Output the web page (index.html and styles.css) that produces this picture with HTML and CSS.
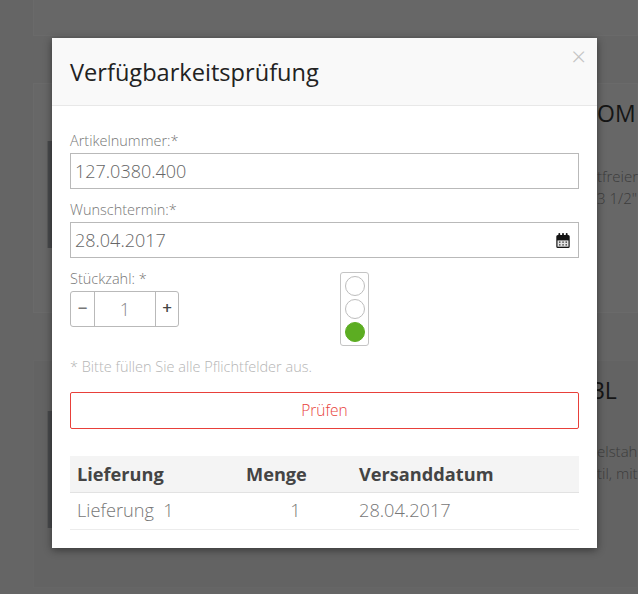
FILE: index.html
```html
<!DOCTYPE html>
<html lang="de">
<head>
<meta charset="utf-8">
<title>Verfügbarkeitsprüfung</title>
<link rel="stylesheet" href="styles.css">
</head>
<body>
<main class="page">
  <div class="card card-a"></div>
  <div class="card card-b">
    <div class="thumb thumb-b"></div>
    <div class="peek">
      <div class="peek-title">OM</div>
      <div class="peek-text">tfreier<br>3 1/2"</div>
    </div>
  </div>
  <div class="card card-c">
    <div class="thumb thumb-c"></div>
    <div class="peek peek-c">
      <div class="peek-title">BL</div>
      <div class="peek-text">elstah<br>til, mit</div>
    </div>
  </div>
</main>
<section class="modal">
  <header class="modal-head">
    <h1>Verfügbarkeitsprüfung</h1>
    <span class="close">×</span>
  </header>
  <div class="modal-body">
    <label class="lbl">Artikelnummer:*</label>
    <div class="field">127.0380.400</div>
    <label class="lbl lbl-next">Wunschtermin:*</label>
    <div class="field field-date">
      <span>28.04.2017</span>
      <svg class="cal" width="14" height="15" viewBox="0 0 14 15">
        <path d="M0.3 3.5a1.5 1.5 0 0 1 1.5-1.5h10.4a1.5 1.5 0 0 1 1.5 1.5v10a1.5 1.5 0 0 1-1.5 1.5h-10.4a1.5 1.5 0 0 1-1.5-1.5z" fill="#141414"/>
        <rect x="2.4" y="0" width="1.8" height="3.4" rx=".8" fill="#141414"/>
        <rect x="6.1" y="0" width="1.8" height="3.4" rx=".8" fill="#141414"/>
        <rect x="9.8" y="0" width="1.8" height="3.4" rx=".8" fill="#141414"/>
        <rect x="1.5" y="7.4" width="11" height="6.3" fill="#e4e4e4"/>
        <path d="M3 9.2h1.5M6.3 9.2h1.5M9.5 9.2h1.5M3 11.8h1.5M6.3 11.8h1.5M9.5 11.8h1.5" stroke="#333" stroke-width="1.3"/>
      </svg>
    </div>
    <div class="qty-row">
      <div class="qty-col">
        <label class="lbl lbl-next">Stückzahl: *</label>
        <div class="stepper">
          <span class="step step-minus">−</span>
          <span class="step-val">1</span>
          <span class="step step-plus">+</span>
        </div>
      </div>
      <div class="light">
        <span class="lamp"></span>
        <span class="lamp"></span>
        <span class="lamp lamp-on"></span>
      </div>
    </div>
    <p class="hint">* Bitte füllen Sie alle Pflichtfelder aus.</p>
    <button class="check" type="button">Prüfen</button>
    <table class="result">
      <thead>
        <tr><th class="c1">Lieferung</th><th class="c2">Menge</th><th>Versanddatum</th></tr>
      </thead>
      <tbody>
        <tr><td class="c1">Lieferung&nbsp; 1</td><td class="c2 num">1</td><td>28.04.2017</td></tr>
      </tbody>
    </table>
  </div>
</section>
</body>
</html>
```
FILE: styles.css
```css
* { box-sizing: border-box; }
html, body { margin: 0; height: 100%; }
body {
  position: relative;
  overflow: hidden;
  background: #656565;
  font-family: "Open Sans", sans-serif;
  font-weight: 300;
  color: #555;
}
.page {
  display: flex;
  flex-direction: column;
  gap: 47px;
  padding-left: 33px;
  height: 594px;
}
.card {
  background: #676767;
  border: 1px solid #6a6a6a;
  flex: none;
  display: flex;
  position: relative;
}
.card-a { height: 36px; border-top: 0; }
.card-b { height: 230px; padding: 57px 0 0 13px; }
.card-c { height: 228px; padding: 50px 0 0 13px; background: #636363; border-color: #666; }
.thumb { width: 12px; background: #484a4c; border-left: 1px solid #5a5a5a; flex: none; }
.thumb-b { height: 107px; }
.thumb-c { height: 117px; }
.peek {
  position: absolute;
  left: 563px;
  top: 14px;
  white-space: nowrap;
}
.peek-c { top: 14px; }
.peek-title { font-size: 23px; font-weight: 400; color: #151515; line-height: 30px; }
.peek-c .peek-title { margin-left: -7px; }
.peek-text { margin-top: 37px; font-size: 15px; line-height: 22px; color: #3c3c3c; }
.peek-c .peek-text { margin-top: 35px; }

.modal {
  position: absolute;
  left: 52px;
  top: 38px;
  width: 545px;
  height: 510px;
  background: #fff;
  box-shadow: 0 2px 8px rgba(0, 0, 0, .45);
}
.modal-head {
  position: relative;
  height: 68px;
  background: #f9f9f9;
  border-bottom: 1px solid #e8e8e8;
  padding: 17px 18px 0;
}
.modal-head h1 {
  margin: 0;
  font-size: 23.6px;
  font-weight: 400;
  line-height: 35px;
  color: #222;
}
.close {
  position: absolute;
  right: 11px;
  top: 4px;
  font-size: 26px;
  font-weight: 300;
  line-height: 28px;
  color: #c4c4c4;
}
.modal-body { padding: 25px 18px 0; }
.lbl {
  display: block;
  margin-bottom: 2px;
  font-size: 14.5px;
  line-height: 20px;
  color: #777;
}
.lbl-next { margin-top: 11px; }
.field {
  height: 36px;
  border: 1px solid #b9b9b9;
  padding: 0 4px;
  font-size: 18px;
  line-height: 34px;
  color: #666;
  display: flex;
  align-items: center;
  justify-content: space-between;
}
.cal { margin-right: 4px; }
.qty-row { display: flex; align-items: flex-start; }
.qty-col { width: 270px; flex: none; }
.stepper {
  width: 109px;
  height: 36px;
  border: 1px solid #b9b9b9;
  border-radius: 3px;
  display: flex;
  align-items: center;
  text-align: center;
}
.step {
  width: 24px;
  height: 100%;
  flex: none;
  line-height: 32px;
  font-size: 17px;
  font-weight: 600;
  color: #444;
}
.step-minus { color: #777; border-right: 1px solid #b9b9b9; }
.step-plus { width: 23px; border-left: 1px solid #b9b9b9; }
.step-val { flex: 1; font-size: 18px; color: #888; }
.light {
  margin-top: 14px;
  width: 29px;
  height: 74px;
  border: 1px solid #c4c4c4;
  border-radius: 3px;
  display: flex;
  flex-direction: column;
  align-items: center;
  gap: 3px;
  padding-top: 3px;
}
.lamp {
  width: 20px;
  height: 20px;
  border-radius: 50%;
  border: 1px solid #bdbdbd;
  flex: none;
}
.lamp-on { background: #5cad22; border-color: #5cad22; }
.hint {
  margin: 11px 0 0;
  font-size: 14.5px;
  line-height: 20px;
  color: #b5b5b5;
}
.check {
  display: block;
  width: 100%;
  height: 37px;
  margin-top: 15px;
  padding: 0 0 2px;
  background: #fff;
  border: 1px solid #e8403a;
  border-radius: 2px;
  font: 300 15.5px "Open Sans", sans-serif;
  color: #e8403a;
}
.result {
  width: 100%;
  margin-top: 27px;
  border-collapse: collapse;
  font-size: 18.2px;
}
.result th {
  height: 36px;
  padding: 0 0 0 7px;
  background: #f4f4f4;
  border-bottom: 1px solid #e2e2e2;
  text-align: left;
  font-weight: 700;
  color: #444;
}
.result td {
  height: 37px;
  padding: 0 0 1px 7px;
  border-bottom: 1px solid #ececec;
  color: #777;
}
.c1 { width: 169px; }
.c2 { width: 113px; }
.result .num { text-align: center; padding-left: 0; }
```
